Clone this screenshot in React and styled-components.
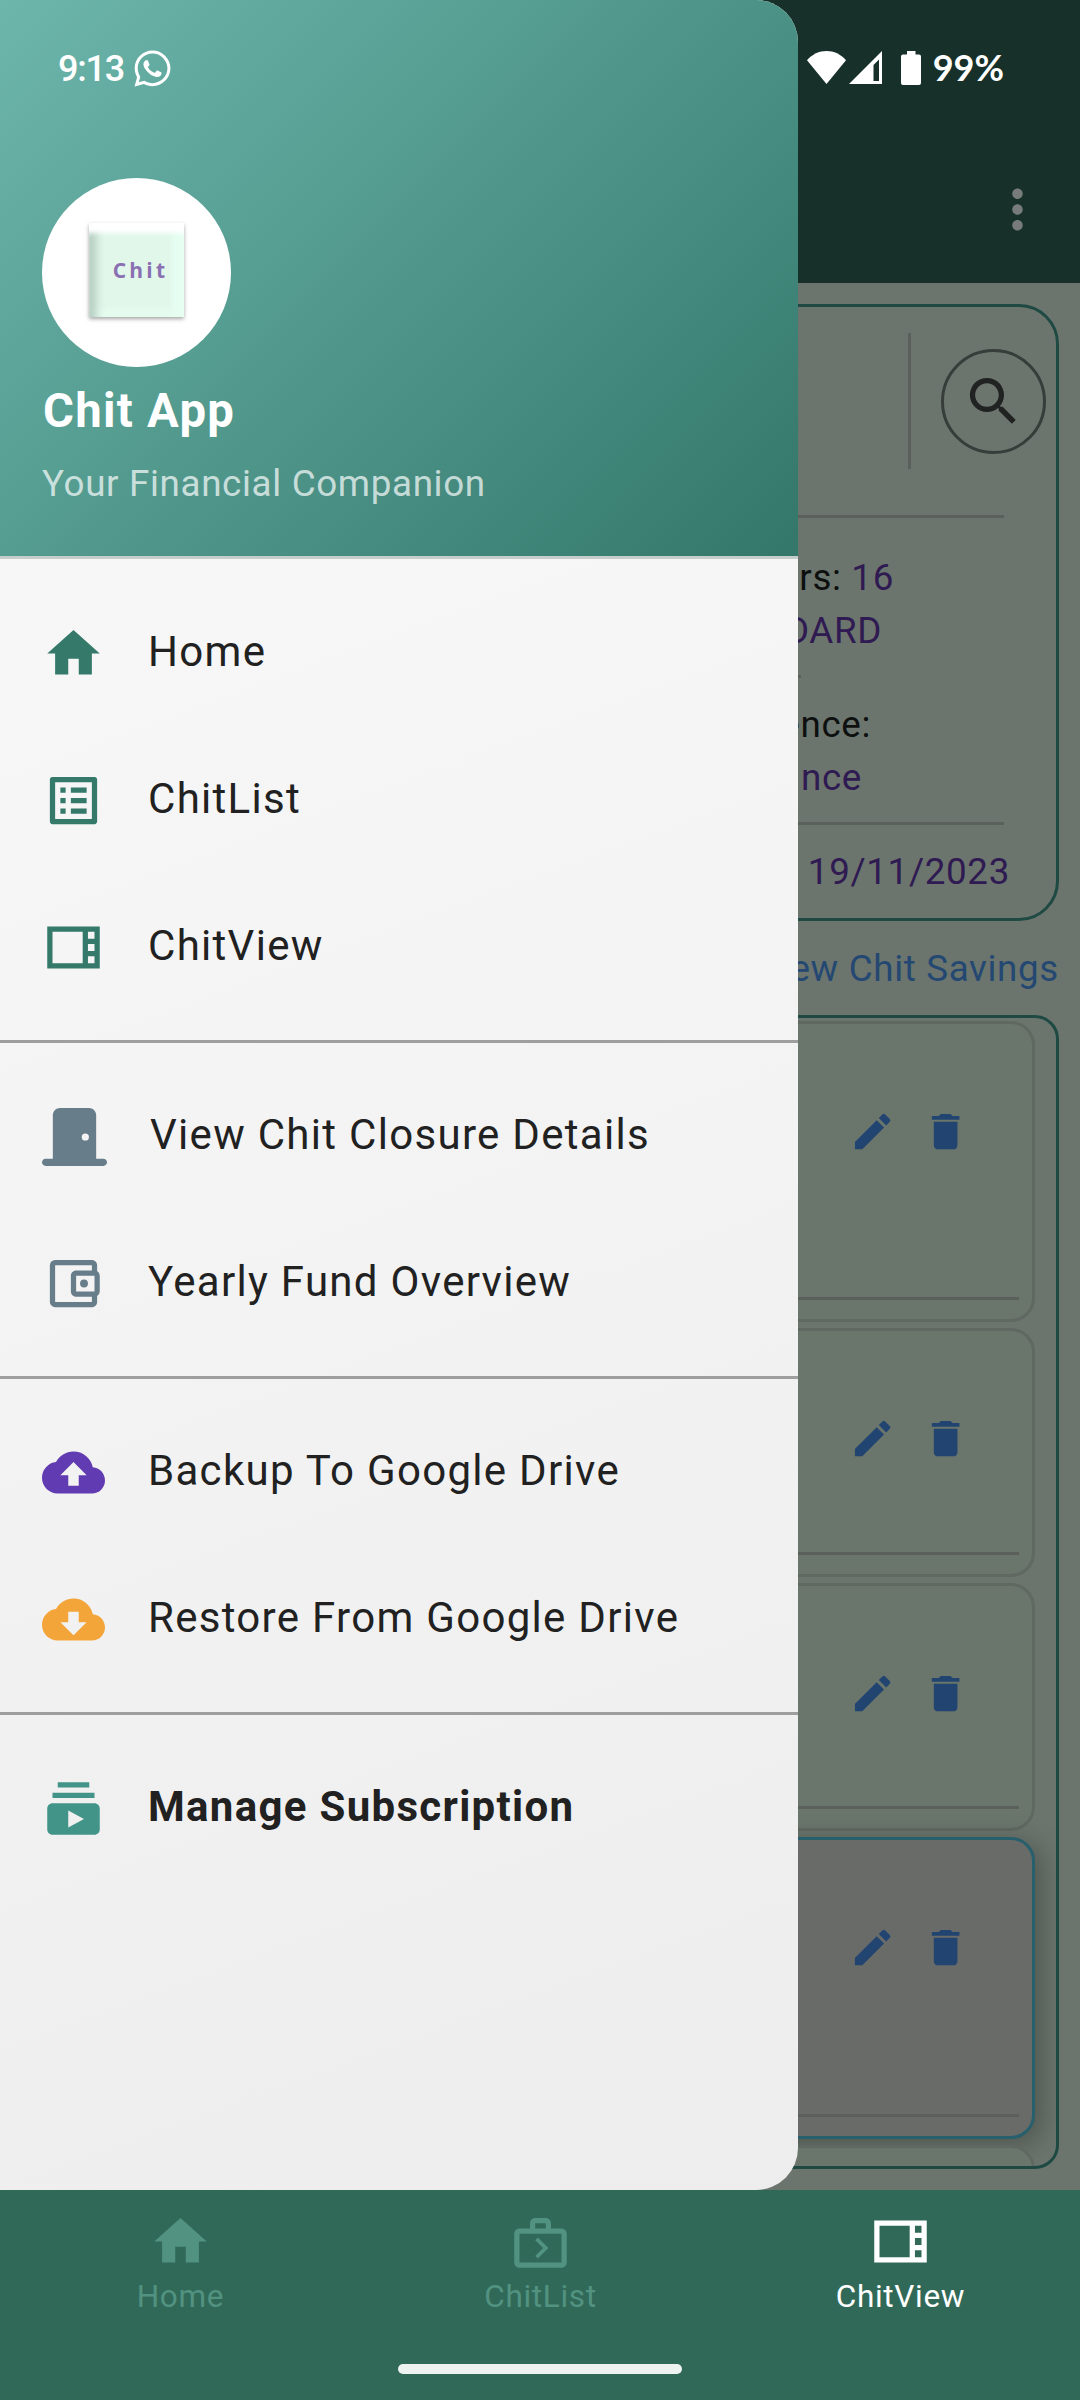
import React from "react";
import styled, { createGlobalStyle } from "styled-components";
import {
  MdHome,
  MdListAlt,
  MdOutlineAccountBalanceWallet,
  MdBackup,
  MdCloudDownload,
  MdSubscriptions,
  MdSearch,
  MdEdit,
  MdDelete,
  MdMoreVert,
} from "react-icons/md";
import { FaWhatsapp } from "react-icons/fa";

const GlobalStyle = createGlobalStyle`
  html, body { margin: 0; padding: 0; }
  body { font-family: Roboto, "Liberation Sans", sans-serif; }
  *, *::before, *::after { box-sizing: border-box; }
  svg { display: block; flex: none; }
`;

const Screen = styled.div`
  position: relative;
  display: flex;
  flex-direction: column;
  width: 1080px;
  height: 2400px;
  overflow: hidden;
  background: #6b756d;
`;

/* ---------- status bar ---------- */

const StatusBar = styled.div`
  position: absolute;
  z-index: 3;
  top: 0;
  left: 0;
  width: 1080px;
  height: 136px;
  padding: 0 76px 0 58px;
  display: flex;
  align-items: center;
  justify-content: space-between;
  color: #fff;
`;

const StatusGroup = styled.div`
  display: flex;
  align-items: center;
`;

const Clock = styled.span`
  font-size: 36px;
  font-weight: 500;
  line-height: 40px;
  letter-spacing: -1.2px;
  margin-right: 8px;
  padding-top: 2px;
`;

const BatteryLevel = styled.span`
  font-family: Lato, Roboto, sans-serif;
  font-size: 36px;
  font-weight: 700;
  line-height: 40px;
  margin-left: 12px;
  padding-bottom: 3px;
`;

/* ---------- dimmed page ---------- */

const AppBar = styled.header`
  flex: none;
  height: 283px;
  padding: 136px 31px 0 0;
  display: flex;
  align-items: center;
  justify-content: flex-end;
  background: #17302a;
  color: #777b79;
`;

const Content = styled.main`
  flex: none;
  height: 1907px;
  padding: 21px 21px 0;
  display: flex;
  flex-direction: column;
  align-items: stretch;
`;

const SummaryCard = styled.section`
  flex: none;
  height: 617px;
  border: 3px solid #1f4a44;
  border-radius: 40px;
  display: flex;
  flex-direction: column;
`;

const SummaryTop = styled.div`
  height: 188px;
  margin-bottom: 20px;
  padding-right: 10px;
  display: flex;
  align-items: center;
  justify-content: flex-end;
  gap: 30px;
`;

const VerticalRule = styled.div`
  width: 3px;
  height: 136px;
  background: #5c605c;
`;

const SearchButton = styled.button`
  width: 105px;
  height: 105px;
  padding: 0;
  border: 3px solid #373d3a;
  border-radius: 50%;
  background: none;
  color: #202322;
  display: flex;
  align-items: center;
  justify-content: center;
`;

const Rule = styled.div`
  flex: none;
  height: 3px;
  margin-left: 24px;
  margin-right: ${(p) => p.$end}px;
  background: #5c605c;
`;

const Details = styled.div`
  padding: ${(p) => p.$top}px 0 ${(p) => p.$bottom}px;
`;

const DetailLine = styled.div`
  height: 53px;
  line-height: 53px;
  padding-right: ${(p) => p.$end}px;
  text-align: right;
  font-size: 36.75px;
  letter-spacing: 0.66px;
  white-space: nowrap;
  color: ${(p) => (p.$value ? "#2f1a52" : "#0d100f")};
`;

const Value = styled.span`
  color: #2f1a52;
`;

const SavingsLink = styled.a`
  flex: none;
  margin: 21px 0 20px;
  height: 53px;
  line-height: 53px;
  text-align: right;
  font-size: 36.75px;
  letter-spacing: 0.66px;
  color: #244872;
`;

const Panel = styled.section`
  flex: none;
  height: 1154px;
  padding: 3px 21px 0;
  border: 3px solid #1f4a44;
  border-radius: 24px;
  overflow: hidden;
  display: flex;
  flex-direction: column;
  gap: 6px;
`;

const Entry = styled.article`
  flex: none;
  height: ${(p) => p.$height}px;
  border: 3px solid ${(p) => (p.$selected ? "#27606c" : "#606961")};
  border-radius: 24px;
  background: ${(p) => (p.$selected ? "#696b68" : "#6a756c")};
  box-shadow: ${(p) => (p.$selected ? "6px 6px 26px 2px rgba(0, 0, 0, 0.25)" : "none")};
  display: flex;
  flex-direction: column;
  justify-content: space-between;
  padding: 84px 13px 19px 0;
`;

const EntryActions = styled.div`
  display: flex;
  justify-content: flex-end;
  gap: 26px;
  padding-right: 50px;
  color: #224470;
`;

/* ---------- drawer ---------- */

const Drawer = styled.aside`
  position: absolute;
  z-index: 2;
  top: 0;
  left: 0;
  width: 798px;
  height: 2190px;
  border-radius: 0 42px 42px 0;
  overflow: hidden;
  background: linear-gradient(160deg, #fafafa 0%, #f5f5f5 40%, #ededed 100%);
  display: flex;
  flex-direction: column;
`;

const DrawerHeader = styled.div`
  flex: none;
  height: 559px;
  padding: 178px 42px 0;
  border-bottom: 3px solid #c6cecb;
  background: linear-gradient(135deg, #6db6ac 0%, #33776a 100%);
  background-clip: padding-box;
  display: flex;
  flex-direction: column;
  align-items: flex-start;
`;

const Avatar = styled.div`
  width: 189px;
  height: 189px;
  border-radius: 50%;
  background: #fff;
  display: flex;
  align-items: center;
  justify-content: center;
`;

const KeyCap = styled.div`
  width: 95px;
  height: 94px;
  margin-bottom: 5px;
  padding: 0 0 1px 8px;
  background: #e1f7ea;
  box-shadow:
    0 2px 4px rgba(0, 0, 0, 0.35),
    inset 0 12px 5px -2px #ffffff,
    inset 15px 0 10px -8px #b4cbbf,
    inset -14px 0 5px -2px #e5fef1,
    inset 0 -10px 5px -2px #e5fcef;
  display: flex;
  align-items: center;
  justify-content: center;
`;

const KeyLabel = styled.span`
  font-family: "Open Sans", sans-serif;
  font-size: 21px;
  font-weight: 700;
  line-height: 24px;
  letter-spacing: 3.2px;
  color: #8a70b2;
`;

const AppName = styled.h1`
  margin: 14px 0 0 1px;
  height: 60px;
  line-height: 60px;
  font-size: 47.25px;
  font-weight: 700;
  letter-spacing: 1.3px;
  color: #fff;
`;

const Tagline = styled.p`
  margin: 16px 0 0;
  height: 53px;
  line-height: 53px;
  font-size: 36.75px;
  letter-spacing: 0.66px;
  color: rgba(255, 255, 255, 0.7);
`;

const Menu = styled.nav`
  padding-top: 21px;
`;

const MenuGroup = styled.div`
  & + & {
    margin-top: 19px;
    padding-top: 20px;
    border-top: 3px solid #9e9e9e;
  }
`;

const MenuItem = styled.div`
  height: 147px;
  padding-left: 42px;
  display: flex;
  align-items: center;
  gap: 43px;
  font-size: 42px;
  font-weight: ${(p) => (p.$bold ? 700 : 400)};
  letter-spacing: 1.3px;
  color: #212121;
`;

const MenuIcon = styled.span`
  display: flex;
  color: ${(p) => p.$color};
`;

const MenuLabel = styled.span`
  line-height: 50px;
  padding-bottom: 3px;
  white-space: nowrap;
`;

/* ---------- bottom navigation ---------- */

const BottomNav = styled.footer`
  flex: none;
  height: 210px;
  background: #316959;
  display: flex;
  flex-direction: column;
  align-items: center;
`;

const Tabs = styled.div`
  width: 100%;
  height: 174px;
  display: grid;
  grid-template-columns: repeat(3, 1fr);
`;

const Tab = styled.div`
  padding-top: 20px;
  display: flex;
  flex-direction: column;
  align-items: center;
  color: ${(p) => (p.$active ? "#ffffff" : "#529280")};
`;

const TabLabel = styled.span`
  margin-top: 5px;
  padding-left: 1px;
  font-size: 31.5px;
  line-height: 38px;
  letter-spacing: 0.7px;
`;

const HomeIndicator = styled.div`
  width: 284px;
  height: 10px;
  border-radius: 5px;
  background: #eef2f0;
`;

/* ---------- icons ---------- */

const SidebarIcon = ({ size = 63 }) => (
  <svg width={size} height={size} viewBox="0 0 24 24" fill="currentColor">
    <path d="M2 4v16h20V4H2zm18 4.67h-2.5V6H20v2.67zm-2.5 2H20v2.67h-2.5v-2.67zM4 6h11.5v12H4V6zm13.5 12v-2.67H20V18h-2.5z" />
  </svg>
);

const NextWeekIcon = ({ size = 63 }) => (
  <svg width={size} height={size} viewBox="0 0 24 24" fill="currentColor">
    <path
      fillRule="evenodd"
      d="M20 7h-4V5c0-1.1-.9-2-2-2h-4c-1.1 0-2 .9-2 2v2H4c-1.1 0-2 .9-2 2v11c0 1.1.9 2 2 2h16c1.1 0 2-.9 2-2V9c0-1.1-.9-2-2-2zM10 5h4v2h-4V5zM4 9h16v11H4V9zm7 9.500l-1-1 3-3-3-3 1-1 4 4-4 4z"
    />
  </svg>
);

const DoorIcon = () => (
  <svg width="65" height="58" viewBox="0 0 576 512" fill="currentColor">
    <path d="M96 64c0-35.3 28.7-64 64-64h256c35.3 0 64 28.700 64 64v384h64c17.700 0 32 14.300 32 32s-14.300 32-32 32H32c-17.700 0-32-14.300-32-32s14.300-32 32-32h64V64zm288 224a32 32 0 1 0 0-64 32 32 0 1 0 0 64z" />
  </svg>
);

const WifiIcon = () => (
  <svg width="39" height="33" viewBox="0 0 39 33" fill="currentColor">
    <path d="M19.500 33L0 9.200C5.300 3.200 12 0 19.500 0S33.700 3.200 39 9.200z" />
  </svg>
);

const SignalIcon = () => (
  <svg width="33" height="33" viewBox="0 0 33 33" fill="currentColor">
    <path fillRule="evenodd" d="M33 0v33H0zM30 8.500L24.500 14v16H30z" />
  </svg>
);

const BatteryIcon = () => (
  <svg width="20" height="34" viewBox="0 0 20 34" fill="currentColor">
    <path d="M6 0h8.500v3.500H18a2 2 0 0 1 2 2V32a2 2 0 0 1-2 2H2a2 2 0 0 1-2-2V5.500a2 2 0 0 1 2-2h4z" />
  </svg>
);

const StatusIcons = styled.div`
  display: flex;
  align-items: center;
  margin-top: -1px;

  svg:nth-child(2) { margin-left: 3px; }
  svg:nth-child(3) { margin-left: 19px; }
`;

/* ---------- data ---------- */

const menuGroups = [
  [
    { label: "Home", icon: <MdHome size={63} />, color: "#35796b" },
    { label: "ChitList", icon: <MdListAlt size={63} />, color: "#35796b" },
    { label: "ChitView", icon: <SidebarIcon />, color: "#35796b" },
  ],
  [
    { label: "View Chit Closure Details", icon: <DoorIcon />, color: "#677d8a" },
    {
      label: "Yearly Fund Overview",
      icon: <MdOutlineAccountBalanceWallet size={63} />,
      color: "#677d8a",
    },
  ],
  [
    { label: "Backup To Google Drive", icon: <MdBackup size={63} />, color: "#613bb1" },
    { label: "Restore From Google Drive", icon: <MdCloudDownload size={63} />, color: "#f3a53a" },
  ],
  [
    {
      label: "Manage Subscription",
      icon: <MdSubscriptions size={63} />,
      color: "#429488",
      bold: true,
    },
  ],
];

const entries = [
  { id: 1, height: 301 },
  { id: 2, height: 249 },
  { id: 3, height: 248 },
  { id: 4, height: 302, selected: true },
  { id: 5, height: 249 },
];

const tabs = [
  { label: "Home", icon: <MdHome size={63} /> },
  { label: "ChitList", icon: <NextWeekIcon /> },
  { label: "ChitView", icon: <SidebarIcon />, active: true },
];

export default function App() {
  return (
    <>
      <GlobalStyle />
      <Screen>
        <AppBar>
          <MdMoreVert size={63} />
        </AppBar>

        <Content>
          <SummaryCard>
            <SummaryTop>
              <VerticalRule />
              <SearchButton aria-label="Search">
                <MdSearch size={63} />
              </SearchButton>
            </SummaryTop>
            <Rule $end={52} />
            <Details $top={33} $bottom={18}>
              <DetailLine $end={162}>
                rs: <Value>16</Value>
              </DetailLine>
              <DetailLine $end={174} $value>
                DARD
              </DetailLine>
            </Details>
            <Rule $end={255} />
            <Details $top={20} $bottom={18}>
              <DetailLine $end={185}>ence:</DetailLine>
              <DetailLine $end={194} $value>
                nce
              </DetailLine>
            </Details>
            <Rule $end={52} />
            <Details $top={20} $bottom={0}>
              <DetailLine $end={46} $value>
                19/11/2023
              </DetailLine>
            </Details>
          </SummaryCard>

          <SavingsLink>View Chit Savings</SavingsLink>

          <Panel>
            {entries.map((entry) => (
              <Entry key={entry.id} $height={entry.height} $selected={entry.selected}>
                <EntryActions>
                  <MdEdit size={47.25} />
                  <MdDelete size={47.25} />
                </EntryActions>
                <Rule $end={0} />
              </Entry>
            ))}
          </Panel>
        </Content>

        <BottomNav>
          <Tabs>
            {tabs.map((tab) => (
              <Tab key={tab.label} $active={tab.active}>
                {tab.icon}
                <TabLabel>{tab.label}</TabLabel>
              </Tab>
            ))}
          </Tabs>
          <HomeIndicator />
        </BottomNav>

        <Drawer>
          <DrawerHeader>
            <Avatar>
              <KeyCap>
                <KeyLabel>Chit</KeyLabel>
              </KeyCap>
            </Avatar>
            <AppName>Chit App</AppName>
            <Tagline>Your Financial Companion</Tagline>
          </DrawerHeader>
          <Menu>
            {menuGroups.map((group) => (
              <MenuGroup key={group[0].label}>
                {group.map((item) => (
                  <MenuItem key={item.label} $bold={item.bold}>
                    <MenuIcon $color={item.color}>{item.icon}</MenuIcon>
                    <MenuLabel>{item.label}</MenuLabel>
                  </MenuItem>
                ))}
              </MenuGroup>
            ))}
          </Menu>
        </Drawer>

        <StatusBar>
          <StatusGroup>
            <Clock>9:13</Clock>
            <FaWhatsapp size={41} />
          </StatusGroup>
          <StatusGroup>
            <StatusIcons>
              <WifiIcon />
              <SignalIcon />
              <BatteryIcon />
            </StatusIcons>
            <BatteryLevel>99%</BatteryLevel>
          </StatusGroup>
        </StatusBar>
      </Screen>
    </>
  );
}
